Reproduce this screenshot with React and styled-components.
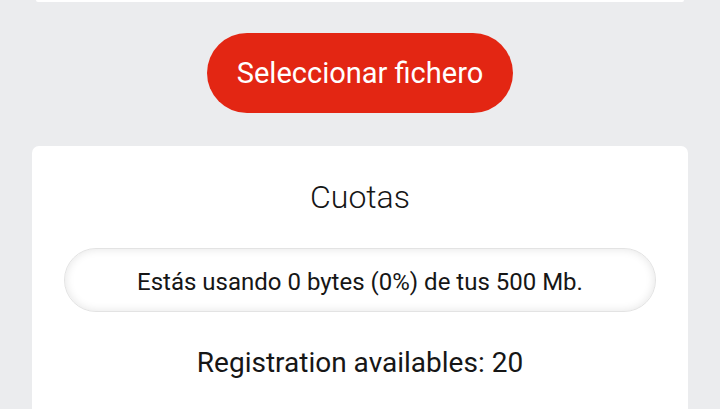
import React from "react";
import styled, { createGlobalStyle } from "styled-components";

const Global = createGlobalStyle`
  html, body {
    margin: 0;
    padding: 0;
    background: #ebecee;
    font-family: Roboto, "Noto Sans", sans-serif;
    color: #161616;
  }
`;

const Page = styled.div`
  display: flex;
  flex-direction: column;
  align-items: center;
  padding: 0 32px;
`;

const PrevCard = styled.div`
  width: 648px;
  height: 2px;
  background: #fff;
  border-radius: 0 0 6px 6px;
`;

const SelectButton = styled.button`
  margin-top: 31px;
  width: 306px;
  height: 80px;
  border: none;
  border-radius: 40px;
  background: #e32613;
  color: #fff;
  font-family: Roboto, sans-serif;
  font-size: 29px;
  font-weight: 400;
  padding: 0;
  cursor: pointer;
`;

const Card = styled.section`
  margin-top: 33px;
  width: 656px;
  background: #fff;
  border-radius: 7px;
  display: flex;
  flex-direction: column;
  align-items: center;
  padding: 31px 32px 40px;
  box-sizing: border-box;
`;

const Title = styled.h2`
  margin: 0;
  font-size: 32px;
  font-weight: 300;
  line-height: 40px;
`;

const Usage = styled.div`
  margin-top: 31px;
  width: 100%;
  height: 64px;
  padding-top: 3px;
  border-radius: 32px;
  box-sizing: border-box;
  border: 1px solid #e3e3e3;
  box-shadow: inset 0 0 10px rgba(0, 0, 0, 0.11);
  display: flex;
  align-items: center;
  justify-content: center;
  font-size: 24px;
`;

const Available = styled.p`
  margin: 33px 0 0;
  font-size: 28px;
  line-height: 36px;
`;

export default function App() {
  return (
    <>
      <Global />
      <Page>
        <PrevCard />
        <SelectButton>Seleccionar fichero</SelectButton>
        <Card>
          <Title>Cuotas</Title>
          <Usage>Estás usando 0 bytes (0%) de tus 500 Mb.</Usage>
          <Available>Registration availables: 20</Available>
        </Card>
      </Page>
    </>
  );
}
